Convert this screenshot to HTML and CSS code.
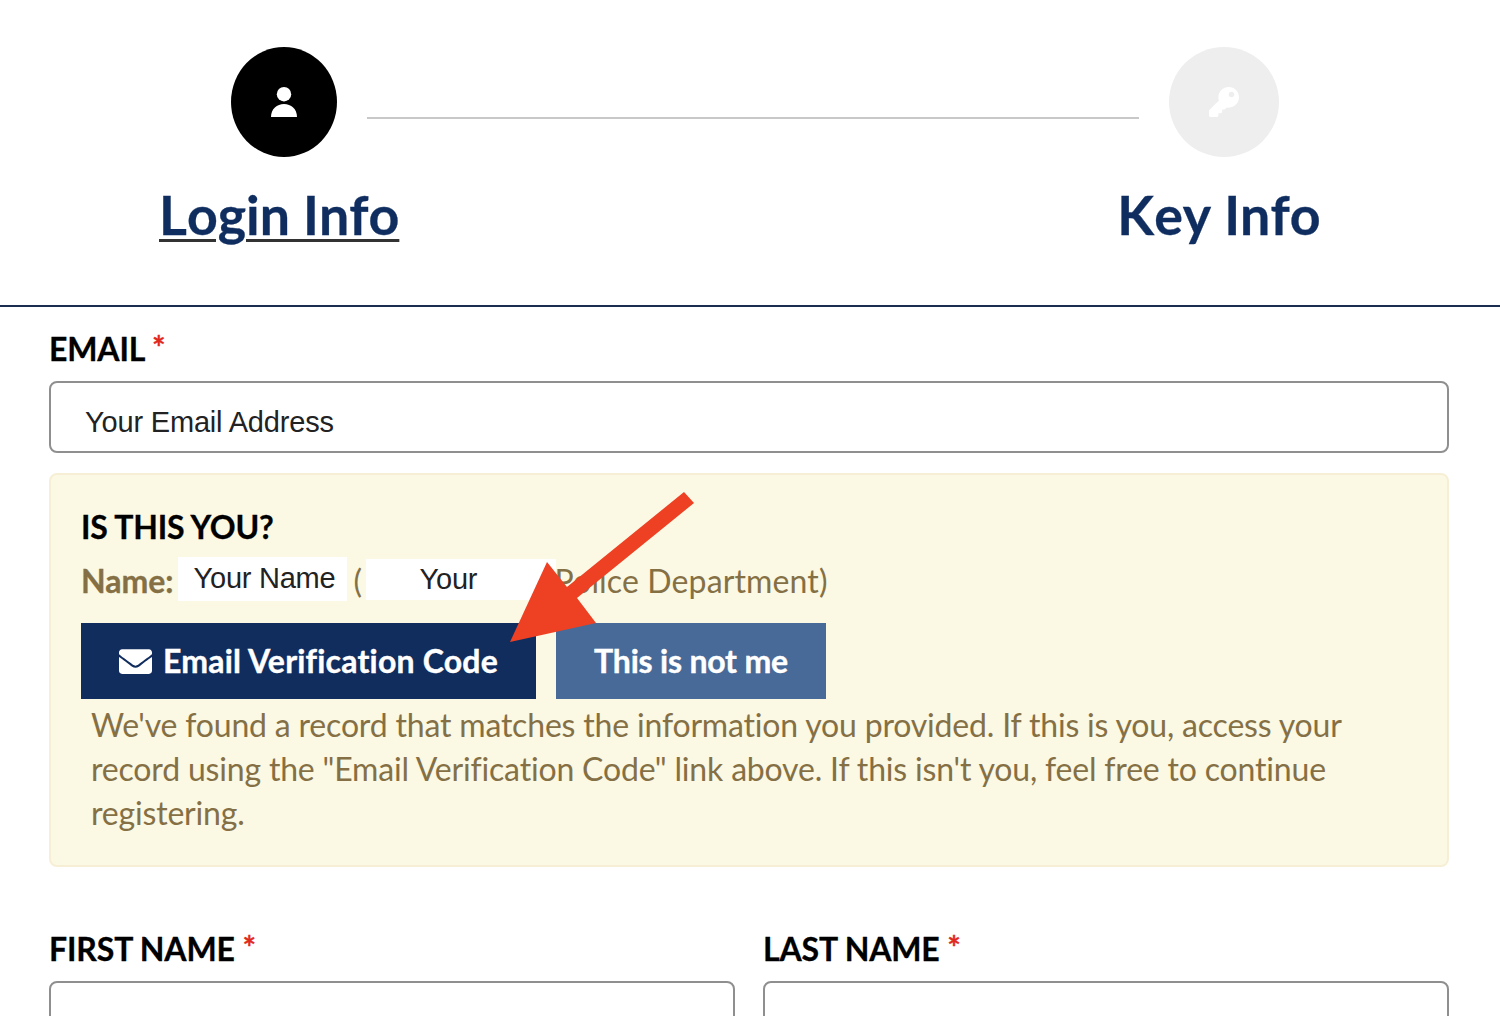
FILE: index.html
```html
<!DOCTYPE html>
<html lang="en">
<head>
<meta charset="utf-8">
<title>Register</title>
<link rel="stylesheet" href="styles.css">
</head>
<body>
<header class="stepper">
  <div class="step-icons">
    <span class="circle circle-active">
      <svg class="icon-user" viewBox="0 0 26 30"><circle fill="#fff" cx="13" cy="7.200" r="7.200"/><path fill="#fff" d="M0 30C0 22 6 17 13 17s13 5 13 13z"/></svg>
    </span>
    <span class="step-line"></span>
    <span class="circle circle-idle">
      <svg class="icon-key" viewBox="0 0 512 512"><path fill="#fff" fill-rule="evenodd" d="M512 176c0 97.200-78.800 176-176 176-11.200 0-22.200-1.100-32.800-3.100l-24 27A24 24 0 0 1 261.200 384H224v40c0 13.300-10.700 24-24 24h-40v40c0 13.300-10.700 24-24 24H24c-13.300 0-24-10.700-24-24v-78.100c0-6.400 2.500-12.500 7-17l161.800-161.800C163.100 213.800 160 195.300 160 176 160 78.800 238.800 0 336 0c97.500 0 176 78.500 176 176zM336 128c0 26.500 21.500 48 48 48s48-21.500 48-48-21.500-48-48-48-48 21.500-48 48z"/></svg>
    </span>
  </div>
  <div class="step-labels">
    <a class="step-label step-current" href="#">Login Info</a>
    <span class="step-label">Key Info</span>
  </div>
</header>

<main class="form">
  <label class="field-label">EMAIL <span class="req">*</span></label>
  <div class="input input-email">Your Email Address</div>

  <section class="notice">
    <h2 class="notice-title">IS THIS YOU?</h2>
    <div class="name-row">
      <strong class="name-key">Name:</strong>
      <span class="mask mask-name">Your Name</span>
      <span class="paren">(</span>
      <span class="mask mask-dept">Your</span>
      <span class="dept">Police Department)</span>
    </div>
    <div class="actions">
      <a class="btn btn-primary" href="#">
        <svg class="icon-mail" viewBox="0 0 512 512"><path fill="#fff" d="M502.300 190.800c3.900-3.100 9.700-.2 9.700 4.700V400c0 26.500-21.500 48-48 48H48c-26.500 0-48-21.500-48-48V195.600c0-5 5.700-7.800 9.700-4.700 22.400 17.400 52.100 39.500 154.100 113.600 21.100 15.400 56.700 47.800 92.200 47.600 35.700.3 72-32.800 92.300-47.600 102-74.100 131.600-96.300 154-113.700zM256 320c23.200.4 56.600-29.200 73.400-41.400 132.700-96.300 142.800-104.700 173.400-128.700 5.800-4.500 9.200-11.500 9.200-18.900v-19c0-26.500-21.500-48-48-48H48C21.500 64 0 85.500 0 112v19c0 7.400 3.400 14.300 9.200 18.900 30.600 23.900 40.700 32.400 173.400 128.700 16.800 12.200 50.200 41.800 73.400 41.400z"/></svg>
        Email Verification Code
      </a>
      <a class="btn btn-secondary" href="#">This is not me</a>
    </div>
    <p class="notice-text">We've found a record that matches the information you provided. If this is you, access your record using the "Email Verification Code" link above. If this isn't you, feel free to continue registering.</p>
  </section>

  <div class="name-fields">
    <div class="name-field">
      <label class="field-label">FIRST NAME <span class="req">*</span></label>
      <div class="input"></div>
    </div>
    <div class="name-field">
      <label class="field-label">LAST NAME <span class="req">*</span></label>
      <div class="input"></div>
    </div>
  </div>
</main>

<svg class="arrow" viewBox="0 0 1500 1016"><polygon fill="#ee4023" points="684,492 694,503 577,598 596,623 510,642 547,562 567,587"/></svg>
</body>
</html>
```
FILE: styles.css
```css
* { box-sizing: border-box; }
html, body { height: 1016px; overflow: hidden; }
body { margin: 0; background: #fff; font-family: Lato, sans-serif; color: #000; position: relative; font-variant-ligatures: common-ligatures; }

.stepper { height: 307px; border-bottom: 2px solid #1a2f4f; padding-top: 47px; }
.step-icons { display: flex; align-items: flex-start; padding-left: 231px; }
.circle { width: 110px; height: 110px; border-radius: 50%; display: flex; align-items: center; justify-content: center; flex: none; }
.circle-active { width: 106px; background: #000; }
.circle-idle { background: #eee; }
.icon-user { width: 26px; height: 30px; margin-top: -1px; }
.icon-key { width: 30px; height: 30px; }
.step-line { width: 772px; height: 2px; margin: 70px 30px 0; background: #c8c8c8; }
.step-labels { display: flex; padding: 23px 0 0 159px; gap: 718px; }
.step-label { font-size: 53.7px; line-height: 68px; font-weight: 700; color: #0f2d5f; font-kerning: none; white-space: nowrap; -webkit-text-stroke: .3px #0f2d5f; }
.step-current { text-decoration: underline; text-decoration-color: #333; text-decoration-thickness: 3px; text-underline-offset: 4px; }

.form { padding: 0 51px 0 49px; }
.field-label { display: block; font-size: 32px; line-height: 40px; font-weight: 700; letter-spacing: -.15px; padding-top: 22px; height: 74px; -webkit-text-stroke: .3px #000; }
.req { color: #e0291c; font-size: 32px; position: relative; top: -1px; -webkit-text-stroke: .3px #e0291c; }
.input { height: 72px; border: 2px solid #8f8f8f; border-radius: 8px; background: #fff; }
.input-email { font: 29px/78px "Liberation Sans", sans-serif; letter-spacing: -.18px; padding-left: 34px; color: #222; }

.notice { margin-top: 20px; height: 394px; background: #fbf8e4; border: 2px solid #f6efd6; border-radius: 8px; padding: 30px 30px 0; color: #857045; font-size: 32px; letter-spacing: -.18px; }
.notice-title { margin: 0; font-size: 32px; line-height: 44px; font-weight: 700; color: #000; letter-spacing: -.2px; -webkit-text-stroke: .3px #000; }
.name-row { display: flex; align-items: center; height: 44px; margin-top: 9px; white-space: nowrap; }
.name-key { font-weight: 700; color: #857045; letter-spacing: 0; -webkit-text-stroke: .3px #857045; }
.mask { font-family: "Liberation Sans", sans-serif; font-size: 29px; letter-spacing: -.25px; background: #fff; color: #222; display: flex; align-items: center; }
.mask-name { width: 169px; height: 44px; margin-left: 4px; padding: 0 0 2px 16px; position: relative; top: -1px; }
.paren { margin-left: 7px; width: 12px; }
.mask-dept { width: 190px; height: 41px; padding-left: 54px; position: relative; z-index: 1; top: -1px; }
.dept { margin-left: -1px; letter-spacing: .13px; }

.actions { display: flex; gap: 20px; margin-top: 21px; }
.btn { height: 76px; display: flex; align-items: center; justify-content: center; color: #fff; font-size: 32px; line-height: 72px; font-weight: 700; letter-spacing: .2px; text-decoration: none; -webkit-text-stroke: .4px #fff; }
.btn-primary { width: 455px; background: #112d5e; gap: 11px; }
.btn-secondary { width: 270px; background: #486a98; letter-spacing: -.2px; }
.icon-mail { width: 33px; height: 33px; flex: none; }
.notice-text { margin: 4px 0 0 10px; line-height: 44px; width: 1290px; }

.name-fields { display: flex; gap: 28px; margin-top: 40px; }
.name-field { flex: 1; }

.arrow { position: absolute; left: 0; top: 0; width: 1500px; height: 1016px; z-index: 2; pointer-events: none; }
```
